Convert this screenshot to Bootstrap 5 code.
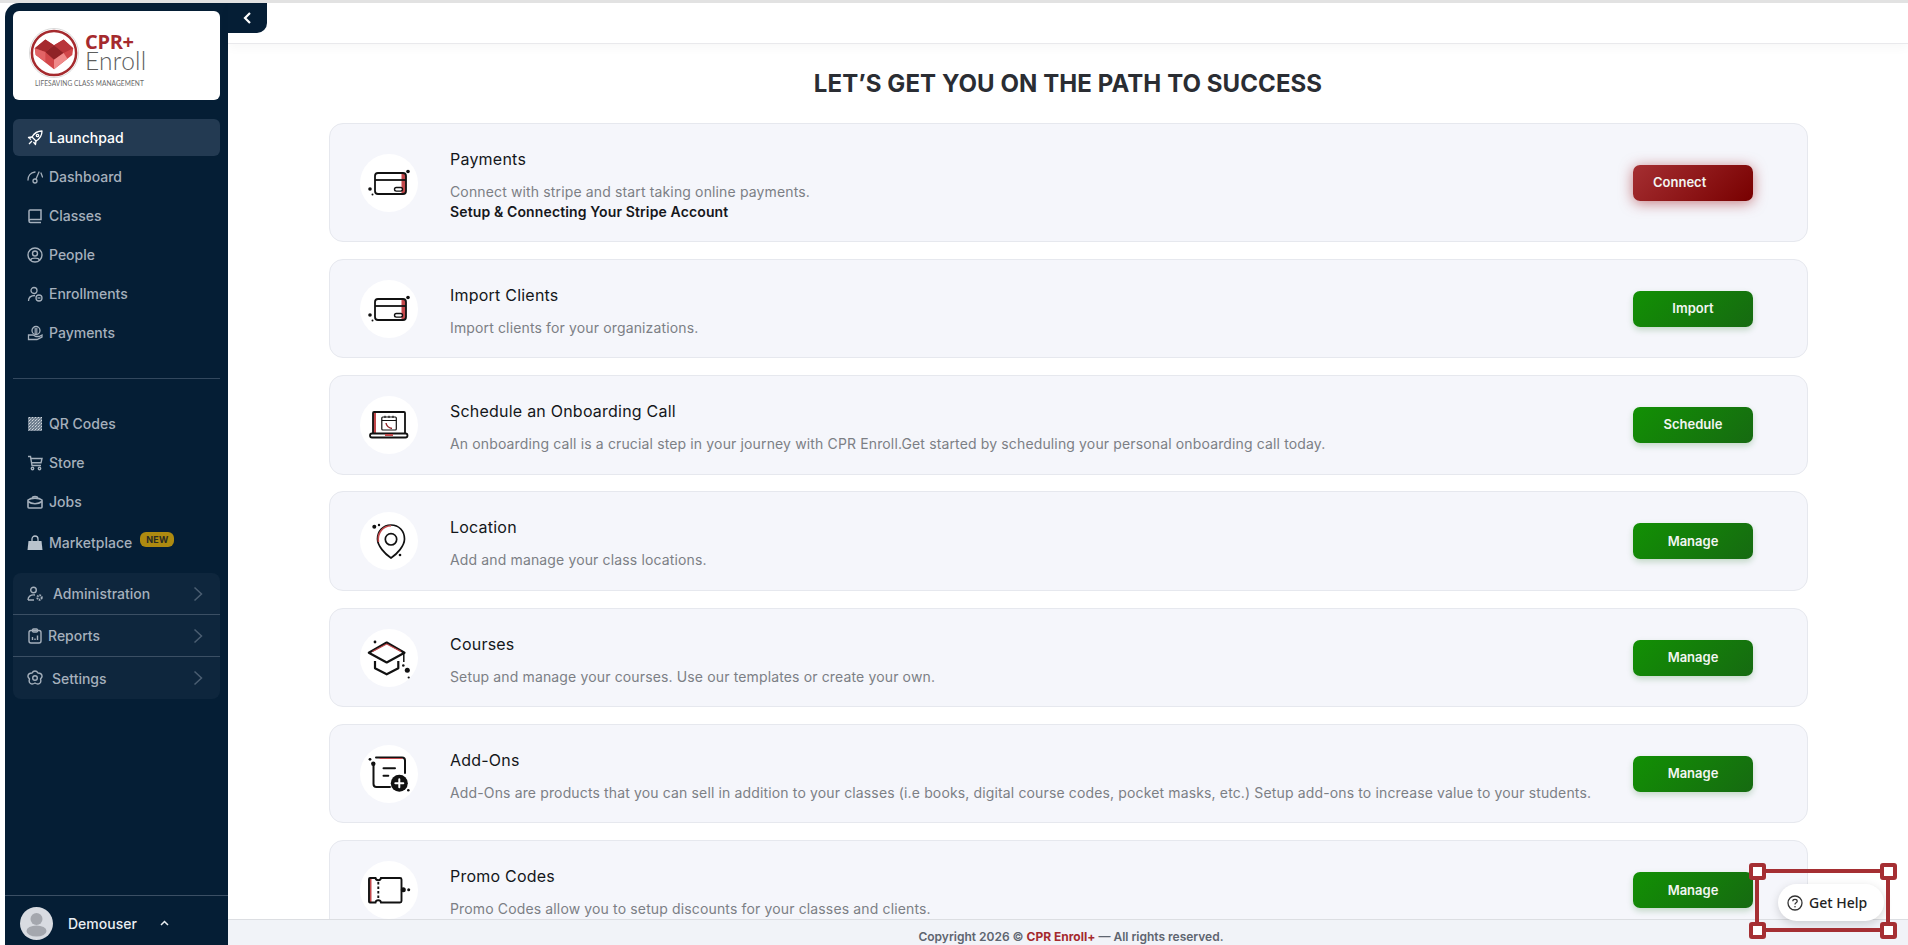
<!DOCTYPE html>
<html lang="en">
<head>
    <meta charset="UTF-8">
    <meta name="viewport" content="width=device-width, initial-scale=1.0">
    <title>CPR+ Enroll - Launchpad</title>
    <link rel="stylesheet" href="https://cdn.jsdelivr.net/npm/bootstrap@5.3.0/dist/css/bootstrap.min.css">
    <style>
        html, body { height: 100%; }
        body {
            font-family: Inter, "Liberation Sans", sans-serif;
            overflow: hidden;
            background: #fff;
            border-top: 3px solid #e2e2e2;
            padding-left: 5px;
            height: 100vh;
        }
        /* sidebar */
        .side-panel {
            width: 223px;
            flex: 0 0 223px;
            background: #051e35;
            border-top-left-radius: 14px;
            padding: 8px 8px 0;
            color: #a5b0bc;
            font-size: 14px;
            font-weight: 500;
        }
        .logo-box {
            height: 89px;
            background: #fff;
            border-radius: 6px;
            margin-bottom: 19px;
            padding: 17px 0 0 16px;
            position: relative;
            gap: 6px;
        }
        .logo-words { padding-top: 6px; }
        .logo-cpr { color: #a52a2e; font: 700 20px/16px "Open Sans", sans-serif; letter-spacing: -.3px; }
        .logo-enroll { color: #5d5d5d; font: 300 24.5px/22px Lato, sans-serif; letter-spacing: .3px; }
        .logo-tag { color: #6a6a6a; font: 400 6.6px/8px Lato, sans-serif; letter-spacing: .08px; white-space: nowrap; position: absolute; left: 22px; top: 68px; }
        .side-link {
            display: flex;
            align-items: center;
            height: 37px;
            margin-bottom: 2px;
            padding-left: 14px;
            border-radius: 6px;
            color: #a5b0bc;
            text-decoration: none;
        }
        .side-link svg { width: 16px; height: 16px; margin-right: 6px; flex: none; }
        .side-link.is-active { background: #233a52; color: #fff; }
        .side-rule { border-top: 1px solid #33485e; margin: 25px 0 26px; }
        .market-link { margin-top: 2px; }
        .new-tag {
            background: #ae8a10;
            color: #2b2b22;
            font-size: 9px;
            font-weight: 700;
            line-height: 15px;
            width: 34px;
            text-align: center;
            border-radius: 6px;
            margin: -7px 0 0 8px;
            letter-spacing: .2px;
        }
        .side-group { background: #0e263d; border-radius: 8px; margin-top: 10px; }
        .side-group .side-link { height: 42px; margin: 0; border-radius: 0; border-bottom: 1px solid #3b4f64; }
        .side-group .side-link:last-child { border-bottom: 0; }
        .side-group .arrow { margin: 0 17px 0 auto; width: 10px; height: 16px; }
        .side-group .gap-wide { margin-right: 10px; }
        .side-group .gap-tight { margin-right: 5px; }
        .side-group .gap-mid { margin-right: 9px; }
        .side-user {
            border-top: 1px solid #3b4f64;
            height: 50px;
            margin: 0 -8px;
            padding: 5px 0 0 15px;
            color: #e9edf1;
        }
        .side-user .avatar { width: 33px; height: 33px; margin-right: 15px; }
        .side-user .caret-up { width: 9px; height: 6px; margin-left: 23px; }
        /* top bar */
        .top-strip {
            height: 41px;
            flex: none;
            border-bottom: 1px solid #e9e9ec;
            box-shadow: 0 4px 10px rgba(0, 0, 0, .03);
        }
        .collapse-tab {
            position: absolute;
            left: 0;
            top: 0;
            width: 39px;
            height: 30px;
            background: #051e35;
            border-bottom-right-radius: 10px;
            display: flex;
            align-items: center;
            justify-content: center;
        }
        .path-title {
            font-size: 24px;
            font-weight: 700;
            letter-spacing: .08px;
            color: #2a2d33;
            text-align: center;
            line-height: 30px;
            margin: 25px 0 23.5px;
        }
        .step-list { padding: 0 100px 0 101px; }
        .step-card {
            background: #f5f6fb;
            border: 1px solid #e6e8ee;
            border-radius: 14px;
            margin-bottom: 16.8px;
            padding: 20px 54px 19.5px 30px;
        }
        .icon-disc { width: 58px; height: 58px; border-radius: 50%; background: #fff; flex: none; margin-right: 32px; }
        .icon-disc svg { display: block; width: 58px; height: 58px; }
        .step-text { padding-top: 3px; }
        .step-title { font-size: 16px; font-weight: 400; letter-spacing: .22px; color: #14161a; line-height: 24px; margin-bottom: 11px; }
        .step-desc { font-size: 14px; letter-spacing: .14px; color: #7c7f85; line-height: 20px; margin: 0; }
        .step-link { font-size: 14px; font-weight: 600; letter-spacing: .13px; color: #15171b; line-height: 20px; display: block; text-decoration: none; }
        .step-btn {
            width: 120px;
            height: 36px;
            flex: none;
            border: 0;
            border-radius: 7px;
            color: #f2f5f1;
            font-size: 13px;
            font-weight: 600;
            padding: 0;
            background: linear-gradient(135deg, #129004, #166a11);
            box-shadow: 0 3px 6px rgba(20, 110, 20, .22);
        }
        .step-btn.is-red {
            text-align: left;
            padding-left: 20px;
            background: linear-gradient(135deg, #a52f32, #780000);
            box-shadow: 0 2px 14px rgba(165, 42, 46, .6);
        }
        .page-foot {
            height: 26px;
            flex: none;
            background: #f1f3f8;
            border-top: 1px solid #dcdee2;
            font-size: 12px;
            font-weight: 600;
            color: #5e6570;
            line-height: 33px;
            overflow: hidden;
            text-align: center;
            padding-left: 6px;
        }
        .page-foot b { color: #a52a2e; font-weight: 700; }
        /* help pill and the red selection box drawn over it */
        .help-pill {
            position: absolute;
            left: 1778px;
            top: 884px;
            width: 106px;
            height: 37px;
            background: #fff;
            border-radius: 19px;
            box-shadow: 0 3px 10px rgba(0, 0, 0, .16);
            display: flex;
            align-items: center;
            padding-left: 9px;
            font: 500 14px "Noto Sans", sans-serif;
            color: #222;
        }
        .help-pill svg { width: 16px; height: 16px; margin-right: 6px; }
        .select-box {
            position: absolute;
            left: 1755px;
            top: 869px;
            width: 135px;
            height: 63px;
            border: 4px solid #a52f33;
        }
        .select-box i {
            position: absolute;
            width: 17px;
            height: 17px;
            background: #fff;
            border: 4.5px solid #a52f33;
            border-radius: 3px;
        }
        .select-box i:nth-child(1) { left: -10.5px; top: -10.5px; }
        .select-box i:nth-child(2) { right: -10.5px; top: -10.5px; }
        .select-box i:nth-child(3) { left: -10.5px; bottom: -10.5px; }
        .select-box i:nth-child(4) { right: -10.5px; bottom: -10.5px; }
    </style>
</head>
<body class="d-flex">
    <!-- Sidebar -->
    <aside class="side-panel d-flex flex-column">
        <div class="logo-box d-flex">
            <svg width="50" height="50" viewBox="0 0 52 52">
                <circle cx="26" cy="26" r="25.500" fill="#fff" stroke="#d9d9d9"/>
                <circle cx="26" cy="26" r="23" fill="#fff" stroke="#a52a2e" stroke-width="2.600"/>
                <path d="M6 21 L17 12 L26 18 L36 12 L46 21 L45 28 L26 43 L7 28Z" fill="#d2474a"/>
                <path d="M17 12 L26 18 L17 25 L6 21Z" fill="#a52a2e"/>
                <path d="M36 12 L46 21 L36 26 L26 18Z" fill="#b8353a"/>
                <path d="M26 18 L36 26 L26 33 L17 25Z" fill="#8f2226"/>
                <path d="M26 33 L36 26 L40 32 L26 43Z" fill="#ef8a8a"/>
                <path d="M6 21 L17 25 L17 35 L7 28Z" fill="#e26466"/>
            </svg>
            <div class="logo-words">
                <div class="logo-cpr">CPR+</div>
                <div class="logo-enroll">Enroll</div>
            </div>
            <div class="logo-tag">LIFESAVING CLASS MANAGEMENT</div>
        </div>

        <a class="side-link is-active" href="#">
            <svg viewBox="0 0 16 16" fill="none" stroke="currentColor" stroke-width="1.300" stroke-linejoin="round"><path d="M15 1 C10 1 7 3.500 5 7 L9 11 C12.500 9 15 6 15 1Z"/><path d="M5 7 L1.500 7.500 L4 9.500M9 11 L8.500 14.500 L6.500 12M5 11 L2 14"/><circle cx="10.500" cy="5.500" r="1.200"/></svg>
            Launchpad
        </a>
        <a class="side-link" href="#">
            <svg viewBox="0 0 16 16" fill="none" stroke="currentColor" stroke-width="1.300" stroke-linecap="round"><path d="M1 11 C1 7 3.500 3.500 8 3"/><path d="M14 4 L15.500 8"/><circle cx="8" cy="12" r="2"/><path d="M9 10 L12 3"/></svg>
            Dashboard
        </a>
        <a class="side-link" href="#">
            <svg viewBox="0 0 16 16" fill="none" stroke="currentColor" stroke-width="1.500"><path d="M2 13 V3 a1 1 0 0 1 1-1 H14 V11.500 H3.500 a1.500 1.500 0 0 0 0 3 H14"/></svg>
            Classes
        </a>
        <a class="side-link" href="#">
            <svg viewBox="0 0 16 16" fill="none" stroke="currentColor" stroke-width="1.400"><circle cx="8" cy="8" r="7"/><circle cx="8" cy="6.500" r="2.500"/><path d="M3.500 13 C4.500 10.500 11.500 10.500 12.500 13"/></svg>
            People
        </a>
        <a class="side-link" href="#">
            <svg viewBox="0 0 16 16" fill="none" stroke="currentColor" stroke-width="1.300"><circle cx="7" cy="4.500" r="3"/><path d="M1.500 15 C1.500 11 4 9.500 8 9.500"/><circle cx="12" cy="12" r="3"/><path d="M10.500 12 H13.500"/></svg>
            Enrollments
        </a>
        <a class="side-link" href="#">
            <svg viewBox="0 0 16 16" fill="none" stroke="currentColor" stroke-width="1.300"><circle cx="9" cy="5.500" r="4"/><path d="M1.500 10 H6 L9 11.500 H12 L15 10 V12 L10 14.500 H1.500Z" fill="#051e35"/><path d="M7.500 4 H10.500 M7.500 6 H10.500 M7.500 8 H10.500"/></svg>
            Payments
        </a>

        <div class="side-rule"></div>

        <a class="side-link" href="#">
            <svg viewBox="0 0 16 16"><defs><pattern id="qrFill" width="3" height="3" patternUnits="userSpaceOnUse"><rect width="3" height="3" fill="#6f7f8f"/><rect width="1" height="1" fill="#b9c2cb"/><rect x="2" y="1" width="1" height="1" fill="#d3d9df"/><rect x="1" y="2" width="1" height="1" fill="#8e9baa"/></pattern></defs><rect x="1" y="1" width="14" height="14" fill="url(#qrFill)"/></svg>
            QR Codes
        </a>
        <a class="side-link" href="#">
            <svg viewBox="0 0 16 16" fill="none" stroke="currentColor" stroke-width="1.400"><path d="M1 1.500 H3.500 L5 10.500 H14"/><path d="M3.800 3.500 H15 L14 7.800 H4.500"/><circle cx="5.500" cy="13.500" r="1.200"/><circle cx="12.500" cy="13.500" r="1.200"/></svg>
            Store
        </a>
        <a class="side-link" href="#">
            <svg viewBox="0 0 16 16" fill="none" stroke="currentColor" stroke-width="1.600"><path d="M5.500 4 C5.500 2 10.500 2 10.500 4"/><path d="M1 6 C4 3.500 12 3.500 15 6 V13 a1 1 0 0 1-1 1 H2 a1 1 0 0 1-1-1Z"/><path d="M1 7.500 C5 10.500 11 10.500 15 7.500"/></svg>
            Jobs
        </a>
        <a class="side-link market-link" href="#">
            <svg viewBox="0 0 16 16" fill="#b9c3cd"><path d="M1.500 6 H14.500 L15.500 15 H.5Z"/><path d="M5 7 V4 a3 3 0 0 1 6 0 V7" fill="none" stroke="#b9c3cd" stroke-width="1.300"/></svg>
            Marketplace <span class="new-tag">NEW</span>
        </a>

        <div class="side-group">
            <a class="side-link" href="#">
                <svg class="gap-wide" viewBox="0 0 16 16" fill="none" stroke="currentColor" stroke-width="1.400"><circle cx="6.500" cy="4" r="2.800"/><path d="M1 14 C1 10 4 8.500 8 9 M1 14 H7"/><circle cx="12.500" cy="11.500" r="2.200" stroke-width="2" stroke-dasharray="1.500 .8"/></svg>
                Administration
                <svg class="arrow" viewBox="0 0 10 16" fill="none" stroke="#4b5e72" stroke-width="1.500"><path d="M1.500 1.500 L8.500 8 L1.500 14.500"/></svg>
            </a>
            <a class="side-link" href="#">
                <svg class="gap-tight" viewBox="0 0 16 16" fill="none" stroke="currentColor" stroke-width="1.400"><rect x="2" y="2.500" width="12" height="12.500" rx="2"/><rect x="5.500" y="1" width="5" height="3" rx="1"/><path d="M5.500 12 V9 M8 12 V10.500 M10.500 12 V7.500"/></svg>
                Reports
                <svg class="arrow" viewBox="0 0 10 16" fill="none" stroke="#4b5e72" stroke-width="1.500"><path d="M1.500 1.500 L8.500 8 L1.500 14.500"/></svg>
            </a>
            <a class="side-link" href="#">
                <svg class="gap-mid" viewBox="0 0 16 16" fill="none" stroke="currentColor" stroke-width="1.400"><path d="M8 1 C9.500 1 10.500 2 11 3 C12.500 3 14.500 3.500 15 5.500 C15.500 7 14.500 8 13.500 9 C14 10.500 14 12.500 12.500 13.500 C11 14.500 9.500 14 8 13 C6.500 14 5 14.500 3.500 13.500 C2 12.500 2 10.500 2.500 9 C1.500 8 .5 7 1 5.500 C1.500 3.500 3.500 3 5 3 C5.500 2 6.500 1 8 1Z"/><circle cx="8" cy="8" r="2.300"/></svg>
                Settings
                <svg class="arrow" viewBox="0 0 10 16" fill="none" stroke="#4b5e72" stroke-width="1.500"><path d="M1.500 1.500 L8.500 8 L1.500 14.500"/></svg>
            </a>
        </div>

        <div class="side-user d-flex align-items-center mt-auto">
            <svg class="avatar" viewBox="0 0 33 33"><circle cx="16.500" cy="16.500" r="16.500" fill="#d8dbe1"/><circle cx="16.500" cy="12" r="6" fill="#a4a7ae"/><ellipse cx="16.500" cy="24" rx="10" ry="5.500" fill="#a4a7ae"/></svg>
            Demouser
            <svg class="caret-up" viewBox="0 0 9 6" fill="none" stroke="#e9edf1" stroke-width="1.500"><path d="M1 5 L4.500 1.500 L8 5"/></svg>
        </div>
    </aside>

    <!-- Main -->
    <main class="flex-grow-1 d-flex flex-column position-relative" style="min-width:0">
        <div class="top-strip"></div>
        <div class="collapse-tab">
            <svg width="9" height="12" viewBox="0 0 9 12" fill="none" stroke="#fff" stroke-width="2.200"><path d="M7 1 L2 6 L7 11"/></svg>
        </div>

        <div class="flex-grow-1 overflow-hidden">
            <h1 class="path-title">LET’S GET YOU ON THE PATH TO SUCCESS</h1>
            <div class="step-list">

                <div class="step-card d-flex align-items-center">
                    <div class="icon-disc">
                        <svg viewBox="0 0 58 58" fill="none" stroke="#111" stroke-width="1.800"><path d="M41.500 19 H46 V38 a2 2 0 0 1-2 2 H41.500Z" fill="#c2474a" stroke="none"/><rect x="15" y="19" width="31" height="21" rx="3"/><path d="M15 26 H46"/><rect x="34.500" y="33.500" width="8" height="3.600" rx="1.800" fill="#fff" stroke-width="1.400"/><circle cx="48" cy="17.500" r="1.800" fill="#111" stroke="none"/><circle cx="10" cy="35" r="1.800" fill="#111" stroke="none"/><circle cx="12.500" cy="40.500" r="1" fill="#111" stroke="none"/></svg>
                    </div>
                    <div class="flex-grow-1 step-text">
                        <div class="step-title">Payments</div>
                        <p class="step-desc">Connect with stripe and start taking online payments.</p>
                        <a class="step-link" href="#">Setup &amp; Connecting Your Stripe Account</a>
                    </div>
                    <button class="step-btn is-red">Connect</button>
                </div>

                <div class="step-card d-flex align-items-center">
                    <div class="icon-disc">
                        <svg viewBox="0 0 58 58" fill="none" stroke="#111" stroke-width="1.800"><path d="M41.500 19 H46 V38 a2 2 0 0 1-2 2 H41.500Z" fill="#c2474a" stroke="none"/><rect x="15" y="19" width="31" height="21" rx="3"/><path d="M15 26 H46"/><rect x="34.500" y="33.500" width="8" height="3.600" rx="1.800" fill="#fff" stroke-width="1.400"/><circle cx="48" cy="17.500" r="1.800" fill="#111" stroke="none"/><circle cx="10" cy="35" r="1.800" fill="#111" stroke="none"/><circle cx="12.500" cy="40.500" r="1" fill="#111" stroke="none"/></svg>
                    </div>
                    <div class="flex-grow-1 step-text">
                        <div class="step-title">Import Clients</div>
                        <p class="step-desc">Import clients for your organizations.</p>
                    </div>
                    <button class="step-btn">Import</button>
                </div>

                <div class="step-card d-flex align-items-center">
                    <div class="icon-disc">
                        <svg viewBox="0 0 58 58" fill="none" stroke="#111" stroke-width="1.800"><path d="M13 16 H16 V37 H13Z" fill="#c2474a" stroke="none"/><path d="M13 37 V17 a1 1 0 0 1 1-1 H44 a1 1 0 0 1 1 1 V37"/><rect x="10" y="37.500" width="37.500" height="4" rx="2"/><path d="M25 38 H33 V40 H25Z" fill="#c2474a" stroke="none"/><rect x="21.800" y="21" width="14.500" height="13" rx="1" stroke-width="1.200"/><path d="M21.800 24.500 H36.300 M25 19.800 V22 M29 19.800 V22 M33 19.800 V22" stroke-width="1.100"/><path d="M26 27 C26.500 30 29 32 32 32.500" stroke="#8f2226" stroke-width="1.400"/></svg>
                    </div>
                    <div class="flex-grow-1 step-text">
                        <div class="step-title">Schedule an Onboarding Call</div>
                        <p class="step-desc">An onboarding call is a crucial step in your journey with CPR Enroll.Get started by scheduling your personal onboarding call today.</p>
                    </div>
                    <button class="step-btn">Schedule</button>
                </div>

                <div class="step-card d-flex align-items-center">
                    <div class="icon-disc">
                        <svg viewBox="0 0 58 58" fill="none" stroke="#111" stroke-width="1.700"><path d="M31 13 C23 13 17.500 19 17.500 27 C17.500 34 25 42 31 46 C37 42 44.500 34 44.500 27 C44.500 19 39 13 31 13Z"/><path d="M18.500 30 C17 21 23 14 31 13.800" stroke="#c2474a" stroke-width="1.600"/><circle cx="31" cy="27.300" r="5.700"/><circle cx="14.300" cy="14.700" r="2" fill="#111" stroke="none"/><circle cx="19" cy="13" r="1.200" fill="#111" stroke="none"/><circle cx="40" cy="43" r="1.300" fill="#111" stroke="none"/></svg>
                    </div>
                    <div class="flex-grow-1 step-text">
                        <div class="step-title">Location</div>
                        <p class="step-desc">Add and manage your class locations.</p>
                    </div>
                    <button class="step-btn">Manage</button>
                </div>

                <div class="step-card d-flex align-items-center">
                    <div class="icon-disc">
                        <svg viewBox="0 0 58 58" fill="none" stroke="#111" stroke-width="2.200" stroke-linejoin="round"><path d="M26.700 13.500 L44.500 23.700 L26.700 33.500 L8.800 23.700Z"/><path d="M12.500 22.500 L26.700 15 L41 22.500" stroke="#c2474a" stroke-width="1.100"/><path d="M15 32 V39.300 L26.700 45.300 L38.300 39.300 V32"/><path d="M43.800 24 V33" stroke-width="1.500"/><circle cx="47.300" cy="41.300" r="2.500" fill="#111" stroke="none"/><circle cx="43.300" cy="36.500" r="1.300" fill="#111" stroke="none"/><circle cx="15" cy="13" r="1.400" fill="#111" stroke="none"/><circle cx="48.700" cy="48.500" r="1.100" fill="#111" stroke="none"/></svg>
                    </div>
                    <div class="flex-grow-1 step-text">
                        <div class="step-title">Courses</div>
                        <p class="step-desc">Setup and manage your courses. Use our templates or create your own.</p>
                    </div>
                    <button class="step-btn">Manage</button>
                </div>

                <div class="step-card d-flex align-items-center">
                    <div class="icon-disc">
                        <svg viewBox="0 0 58 58" fill="none" stroke="#111" stroke-width="2" stroke-linecap="round"><path d="M13.500 20 V39 a3 3 0 0 0 3 3 H30"/><path d="M16 12.500 H42 a3 3 0 0 1 3 3 V28"/><path d="M20 13.500 H42" stroke="#c2474a" stroke-width="1"/><path d="M23.500 23.300 H35 M23.500 30.700 H28.300"/><circle cx="39.300" cy="38.300" r="8.500" fill="#111" stroke="none"/><path d="M35.300 38.300 H43.300 M39.300 34.300 V42.300" stroke="#fff"/><circle cx="13.300" cy="18.700" r="2.200" fill="#111" stroke="none"/><circle cx="10" cy="14.300" r="1.400" fill="#111" stroke="none"/><circle cx="48.300" cy="45.300" r="1.300" fill="#111" stroke="none"/></svg>
                    </div>
                    <div class="flex-grow-1 step-text">
                        <div class="step-title">Add-Ons</div>
                        <p class="step-desc">Add-Ons are products that you can sell in addition to your classes (i.e books, digital course codes, pocket masks, etc.) Setup add-ons to increase value to your students.</p>
                    </div>
                    <button class="step-btn">Manage</button>
                </div>

                <div class="step-card d-flex align-items-center">
                    <div class="icon-disc">
                        <svg viewBox="0 0 58 58" fill="none" stroke="#111" stroke-width="1.900"><path d="M9.500 17 H11.500 V41 H9.500Z" fill="#c2474a" stroke="none"/><path d="M10 17 H15.500 C16 20 20.500 20 21 17 H40 a1.500 1.500 0 0 1 1.500 1.500 V40 a1.500 1.500 0 0 1-1.500 1.500 H21 C20.500 38.500 16 38.500 15.500 41.500 H10 a1 1 0 0 1-1-1 V18 a1 1 0 0 1 1-1Z"/><path d="M18.300 21 V38" stroke-dasharray="2.500 2"/><circle cx="43.300" cy="28.700" r="2.500" fill="#111" stroke="none"/><circle cx="48.700" cy="28.700" r="1.500" fill="#111" stroke="none"/></svg>
                    </div>
                    <div class="flex-grow-1 step-text">
                        <div class="step-title">Promo Codes</div>
                        <p class="step-desc">Promo Codes allow you to setup discounts for your classes and clients.</p>
                    </div>
                    <button class="step-btn">Manage</button>
                </div>

            </div>
        </div>

        <footer class="page-foot">Copyright 2026 © <b>CPR Enroll+</b> — All rights reserved.</footer>
    </main>

    <!-- Get Help -->
    <div class="help-pill">
        <svg viewBox="0 0 16 16" fill="none" stroke="#333" stroke-width="1.300"><circle cx="8" cy="8" r="7"/><path d="M5.800 6.200 C5.800 3.800 10.200 3.800 10.200 6.200 C10.200 7.800 8 7.800 8 9.500"/><circle cx="8" cy="11.800" r=".8" fill="#333" stroke="none"/></svg>
        Get Help
    </div>
    <div class="select-box"><i></i><i></i><i></i><i></i></div>

    <script src="https://cdn.jsdelivr.net/npm/bootstrap@5.3.0/dist/js/bootstrap.bundle.min.js"></script>
</body>
</html>
